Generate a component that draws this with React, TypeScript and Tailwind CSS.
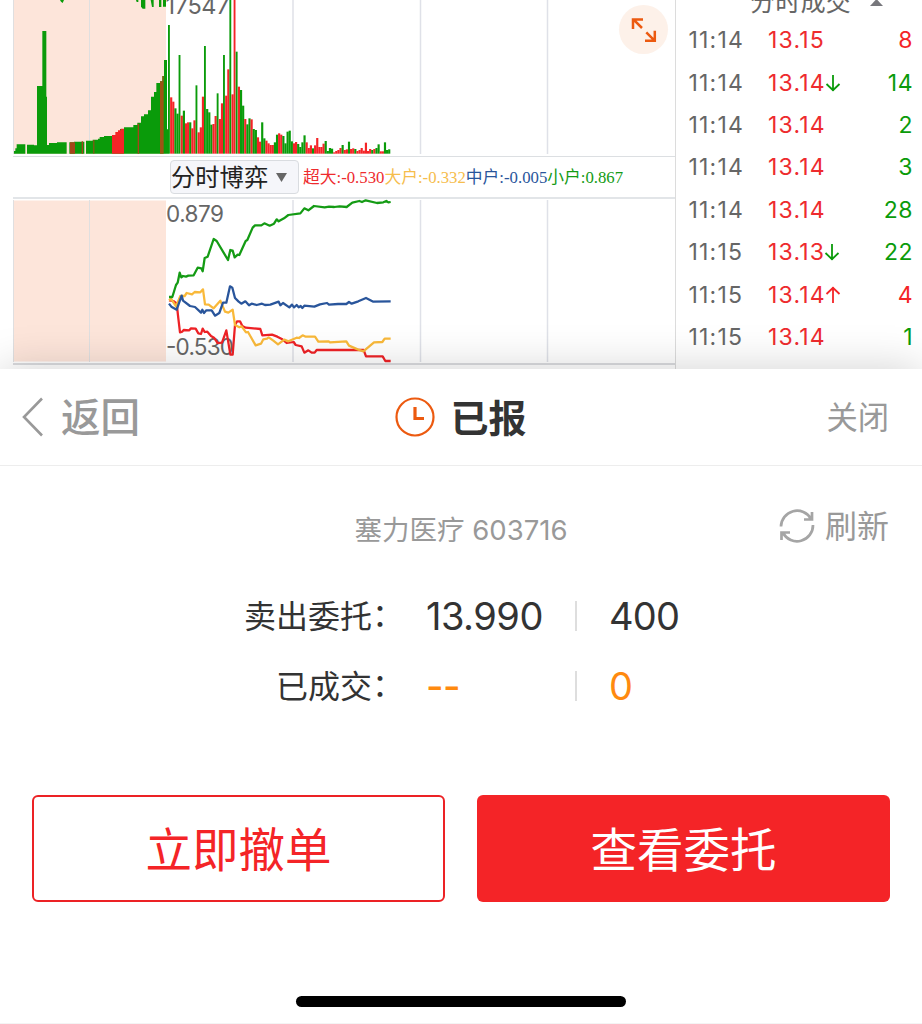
import React from "react";

const SANS = "font-['Inter','Noto_Sans_CJK_SC',sans-serif]";
const GREEN = "#0a9b0a";
const RED = "#f42427";

/* Volume bars after the open: colour letter and top edge, in thirds of a pixel. */
const VOLUME =
  "g75 r292 r305 g325 g341 g165 r347 g332 r370 r367 g367 r385 r361 g256 r397 r382 r290 g138 g327 g337 g374 r372 r348 g280 r357 r310 g165 r287 r208 g-9 r283 r-9 g155 r260 g270 g317 r357 g373 g355 r358 g387 g390 r412 r425 g367 g415 r422 r430 r435 r435 g427 g404 r400 r404 g408 g430 g395 g392 g424 r430 r426 g432 g441 g427 g406 r427 r444 r436 g445 r436 r414 r441 r441 r431 g423 g453 g444 g446 r457 r453 r450 r444 g435 r450 r448 g425 r447 r445 g447 r453 r450 r444 r452 r428 r453 r447 g450 r447 g444 g433 r454 r454 g427 g450 g448".split(
    " ",
  );

const TRADES = [
  { time: "11:14", price: "13.15", qty: "8", up: true },
  { time: "11:14", price: "13.14", qty: "14", arrow: "down" },
  { time: "11:14", price: "13.14", qty: "2" },
  { time: "11:14", price: "13.14", qty: "3" },
  { time: "11:14", price: "13.14", qty: "28" },
  { time: "11:15", price: "13.13", qty: "22", arrow: "down" },
  { time: "11:15", price: "13.14", qty: "4", up: true, arrow: "up" },
  { time: "11:15", price: "13.14", qty: "1" },
];

function VolumeChart() {
  return (
    <svg width="675" height="156" className="block shrink-0">
      <rect x="13" y="0" width="153" height="154" fill="#fde5da" />
      <path d="M13.5 0V154M89.5 0V154" stroke="#dfdfe0" fill="none" />
      <path d="M293 0V154M420.5 0V154M547.5 0V154" stroke="#dfe1e8" strokeWidth="1.5" fill="none" />
      <g transform="scale(.333333)">
        <path
          fill={GREEN}
          d="M42 461V453H46V445H50V433H76V461ZM81 461V434H102V436H111V258H127V93H139V290H141V435H147V429H171V427H200V461ZM208 461V427H222V425H253V461ZM258 461V422H278V419H294V416H299V411H312V408H336V405H348V396H360V387H372V382H400V375H412V368H423V349H432V343H444V331H453V290H462V276H469V249H480V244H487V228H492V180H501V388H505V461Z"
        />
        <path fill={RED} d="M336 461V405H346V396H354V391H362V386H372V461Z" />
        <path fill="#a5451a" d="M210 461V427H225V461ZM245 461V424H249V461ZM280 461V420H283V461ZM413 461V371H417V461Z" />
        <path fill="#9b5414" d="M480 461V244H487V228H491V461Z" />
        {VOLUME.map((bar, i) => {
          const top = Number(bar.slice(1));
          return (
            <rect
              key={i}
              x={504 + i * 6.35}
              y={top}
              width={top < 170 || top === 256 || top === 280 ? 5.6 : 6.5}
              height={461 - top}
              fill={bar[0] === "g" ? GREEN : RED}
            />
          );
        })}
        <path fill={GREEN} d="M180 0H192L188 9L183 5ZM408 0H415V6H410ZM423 0H436V26H428L423 20ZM452 0H461V21H456ZM477 0H484V21H477ZM489 0H498V20H489Z" />
      </g>
      <text x="165.5" y="14" fontSize="23.5" fill="#666" textLength="64" className={SANS}>
        17547
      </text>
    </svg>
  );
}

function FlowChart() {
  return (
    <svg width="675" height="172" className="block shrink-0">
      <path d="M13 1H675" stroke="#d9dce0" strokeWidth="1.5" />
      <rect x="13" y="3.5" width="153" height="161" fill="#fde5da" />
      <path d="M13.5 3V165M89.5 3V165" stroke="#dfdfe0" fill="none" />
      <path d="M293 3V165M420.5 3V165M547.5 3V165" stroke="#dfe1e8" strokeWidth="1.5" fill="none" />
      <path d="M13 167H675" stroke="#cfd1d4" strokeWidth="1.5" />
      <text x="166" y="25" fontSize="22.5" fill="#666" textLength="58" className={SANS}>
        0.879
      </text>
      <text x="166" y="157.500" fontSize="22.5" fill="#666" textLength="68" className={SANS}>
        -0.530
      </text>
      <g transform="translate(150 -7) scale(.333333)" fill="none" strokeWidth="6.8" strokeLinejoin="round">
        <path
          stroke="#ee2226"
          d="M57 331L70 333L80 340L85 385L90 427L97 425L101 420L118 421L123 415L137 416L145 430L153 432L158 416L164 426L172 425L183 438L192 443L203 459L216 458L229 421L241 494H248L255 405L261 394L270 394L277 408L287 413L331 417L337 436L366 434L382 440L397 448L410 459L431 456L437 465L455 469L463 488L475 481L485 488H494L500 480H641L648 499H698L706 513H722"
        />
        <path
          stroke="#f9b93a"
          d="M57 331L63 326L78 349L91 318L104 318L110 309L126 313L134 306L151 307L159 298L165 343L176 344L191 355L211 332L225 365L235 368L248 359L255 405L268 412L275 409L288 427L294 426L317 466L333 461L340 448L351 446L356 442L370 452L384 463L403 449L415 454L440 443L447 444L458 436L467 440L495 440L505 455L536 454L540 457L589 454L597 467L623 478L640 484L672 457L697 456L704 446H722"
        />
        <path
          stroke="#29559b"
          d="M57 341L64 350L80 359L95 317L99 332L120 348L135 351L153 368L157 359L162 369L169 361L185 361L195 377L208 369L219 338L229 338L240 289L247 293L255 324L266 335L274 341L286 334L297 346L305 341L320 345L336 341L345 345L361 344L386 335L391 346L399 339L418 352L426 344L432 352L440 345L446 352L452 348L457 354L463 347L493 350L510 343L531 339L537 344L564 342L589 342L597 336L605 341L625 334L648 324L670 335L722 334"
        />
        <path
          stroke="#149b14"
          d="M57 321L67 321L78 285L83 278L89 248L94 262L99 258L108 260L115 257L131 256L143 233L154 235L158 244L164 204L173 200L191 147L200 153L234 210L241 180L248 182L254 202L263 194L268 195L287 153L292 150L308 113L315 106L334 106L343 100L359 107L372 101L380 88L386 94L402 85L415 75L451 70L463 55L475 61L492 48L524 52L537 50L553 51L569 49L590 51L607 38L628 33L636 36L647 31L681 39L700 37L709 33L715 37L722 36"
        />
      </g>
    </svg>
  );
}

function Arrow({ dir }: { dir: string }) {
  return (
    <svg width="16" height="18" viewBox="0 0 16 18" fill="none" strokeWidth="1.8" className="-ml-[1px] mb-[1px] shrink-0">
      {dir === "down" ? (
        <path d="M8 1V17M1.500 10L8 16.2L14.500 10" stroke={GREEN} />
      ) : (
        <path d="M8 17V1M1.500 8L8 1.8L14.500 8" stroke={RED} />
      )}
    </svg>
  );
}

function Market() {
  return (
    <section className="flex h-[369px] overflow-hidden bg-white">
      <div className="relative flex w-[676px] shrink-0 flex-col border-r border-[#dcdcdc]">
        <VolumeChart />
        <div className="ml-[13px] flex h-[41px] items-center border-t border-[#dcdfe2] pl-[157px]">
          <button className="flex h-[34px] w-[129px] shrink-0 items-center rounded-[4px] border border-[#d9dce0] bg-[#f5f6fa] text-[24.3px] leading-none text-[#222]">
            <span className="whitespace-nowrap">分时博弈</span>
            <svg width="11" height="9" className="ml-[8px]">
              <path d="M0 0H11L5.5 9Z" fill="#666" />
            </svg>
          </button>
          <div className="ml-[4px] flex whitespace-nowrap pt-[2px] font-['Liberation_Serif','Noto_Sans_CJK_SC',serif] text-[16.75px] leading-none">
            <span className="text-[#ee2b2e]">超大:-0.530</span>
            <span className="text-[#f6bd4d]">大户:-0.332</span>
            <span className="text-[#29559b]">中户:-0.005</span>
            <span className="text-[#149b14]">小户:0.867</span>
          </div>
        </div>
        <FlowChart />
        <button className="absolute left-[619px] top-[5px] size-[49px] rounded-full bg-[#fdf1e9] p-[12px]">
          <svg width="26" height="26" viewBox="0 0 26 26" fill="none" stroke="#ec5a10" strokeWidth="2.5">
            <path d="M2 12V2.6H12M2.6 2.6L11 11M23.8 13.700V23.800H14M23.800 23.800L15.300 15.300" />
          </svg>
        </button>
      </div>
      <div className="flex w-[246px] shrink-0 flex-col">
        <div className="-mt-[14px] flex h-[33.5px] shrink-0 items-center pl-[74px] text-[25.2px] leading-none text-[#666]">
          分时成交
          <svg width="13" height="7" className="ml-[19px]">
            <path d="M0 7L6.5 0L13 7Z" fill="#77777c" />
          </svg>
        </div>
        {TRADES.map((t, i) => (
          <div key={i} className="flex h-[42.4px] shrink-0 items-center pl-[12.5px] pr-[9px] text-[23px] leading-none">
            <span className="w-[79.5px] tracking-[1.2px] text-[#666]">{t.time}</span>
            <span className="tracking-[1.2px] text-[#ee2b2e]">{t.price}</span>
            {t.arrow && <Arrow dir={t.arrow} />}
            <span className={t.up ? "ml-auto tracking-[0.5px] text-[#f42427]" : "ml-auto tracking-[0.5px] text-[#0a9b0a]"}>
              {t.qty}
            </span>
          </div>
        ))}
      </div>
    </section>
  );
}

function OrderRow({ label, price, qty, tone }: { label: string; price: string; qty: string; tone: string }) {
  return (
    <div className="flex h-[70px] items-center leading-none">
      <div className="flex w-[404px] shrink-0 justify-end pt-[2px] text-[32px] text-[#333]">
        <span>{label}</span>
        <span className="-mt-[2px] mb-[2px]">：</span>
      </div>
      <div className={`w-[171px] shrink-0 pl-[22px] text-[38px] tracking-[-0.5px] ${tone}`}>
        {price === "--" ? <span className="font-medium">{price}</span> : price}
      </div>
      <div className="h-[30px] w-[2px] bg-[#dedede]" />
      <div className={`pl-[32px] text-[38px] tracking-[-0.8px] ${tone}`}>{qty}</div>
    </div>
  );
}

export default function App() {
  return (
    <main className={`h-[1024px] w-[922px] overflow-hidden bg-white ${SANS}`}>
      <Market />
      <section className="relative flex h-[655px] flex-col border-b border-[#f4f4f4] bg-white shadow-[0_0_42px_rgba(0,0,0,0.18)]">
        <header className="flex h-[97px] shrink-0 items-center justify-between border-b border-[#ededed] px-[22px] leading-none">
          <button className="flex w-[200px] items-center text-[39.5px] font-medium text-[#999]">
            <svg width="22" height="40" viewBox="0 0 22 40" fill="none" stroke="#999" strokeWidth="2.6" className="mr-[17px]">
              <path d="M20 1.5L2 20L20 38.5" />
            </svg>
            <span className="pt-[4px]">返回</span>
          </button>
          <h1 className="flex items-center text-[38px] font-bold text-[#333]">
            <svg width="40" height="40" viewBox="0 0 40 40" fill="none" stroke="#ec5a10" className="mr-[15px]">
              <circle cx="20" cy="20" r="18.5" strokeWidth="2.2" />
              <path d="M20 10V21.5H29" strokeWidth="3.2" />
            </svg>
            <span className="pt-[2px]">已报</span>
          </h1>
          <button className="w-[200px] pr-[11px] pt-[3px] text-right text-[31.3px] text-[#999]">关闭</button>
        </header>
        <div className="relative mt-[36px] flex h-[56px] shrink-0 items-center justify-center text-[27.5px] leading-none text-[#999]">
          <span className="pt-[2px]">塞力医疗 603716</span>
          <button className="absolute right-[33px] top-[6px] flex items-center text-[32px]">
            <svg width="36" height="36" viewBox="0 0 36 36" fill="none" stroke="#a5a5a5" strokeWidth="2.7" className="mb-[2px] mr-[10px]">
              <path d="M2 18.5A16 16 0 0 1 32 11M33 4V11.5H25M34 17A16 16 0 0 1 4 25M2.500 32V24.500H11" />
            </svg>
            刷新
          </button>
        </div>
        <div className="mt-[23px] flex flex-col">
          <OrderRow label="卖出委托" price="13.990" qty="400" tone="text-[#333]" />
          <OrderRow label="已成交" price="--" qty="0" tone="text-[#ff8a0f]" />
        </div>
        <div className="mt-[74px] grid h-[107px] shrink-0 grid-cols-2 gap-[32px] px-[32px] text-[46.5px] leading-none">
          <button className="rounded-[6px] border-2 border-[#ec2225] pt-[3px] text-[#f42427]">立即撤单</button>
          <button className="rounded-[6px] bg-[#f42427] pt-[3px] text-white">查看委托</button>
        </div>
        <div className="mx-auto mb-[16px] mt-auto h-[11px] w-[330px] shrink-0 rounded-full bg-black" />
      </section>
    </main>
  );
}
